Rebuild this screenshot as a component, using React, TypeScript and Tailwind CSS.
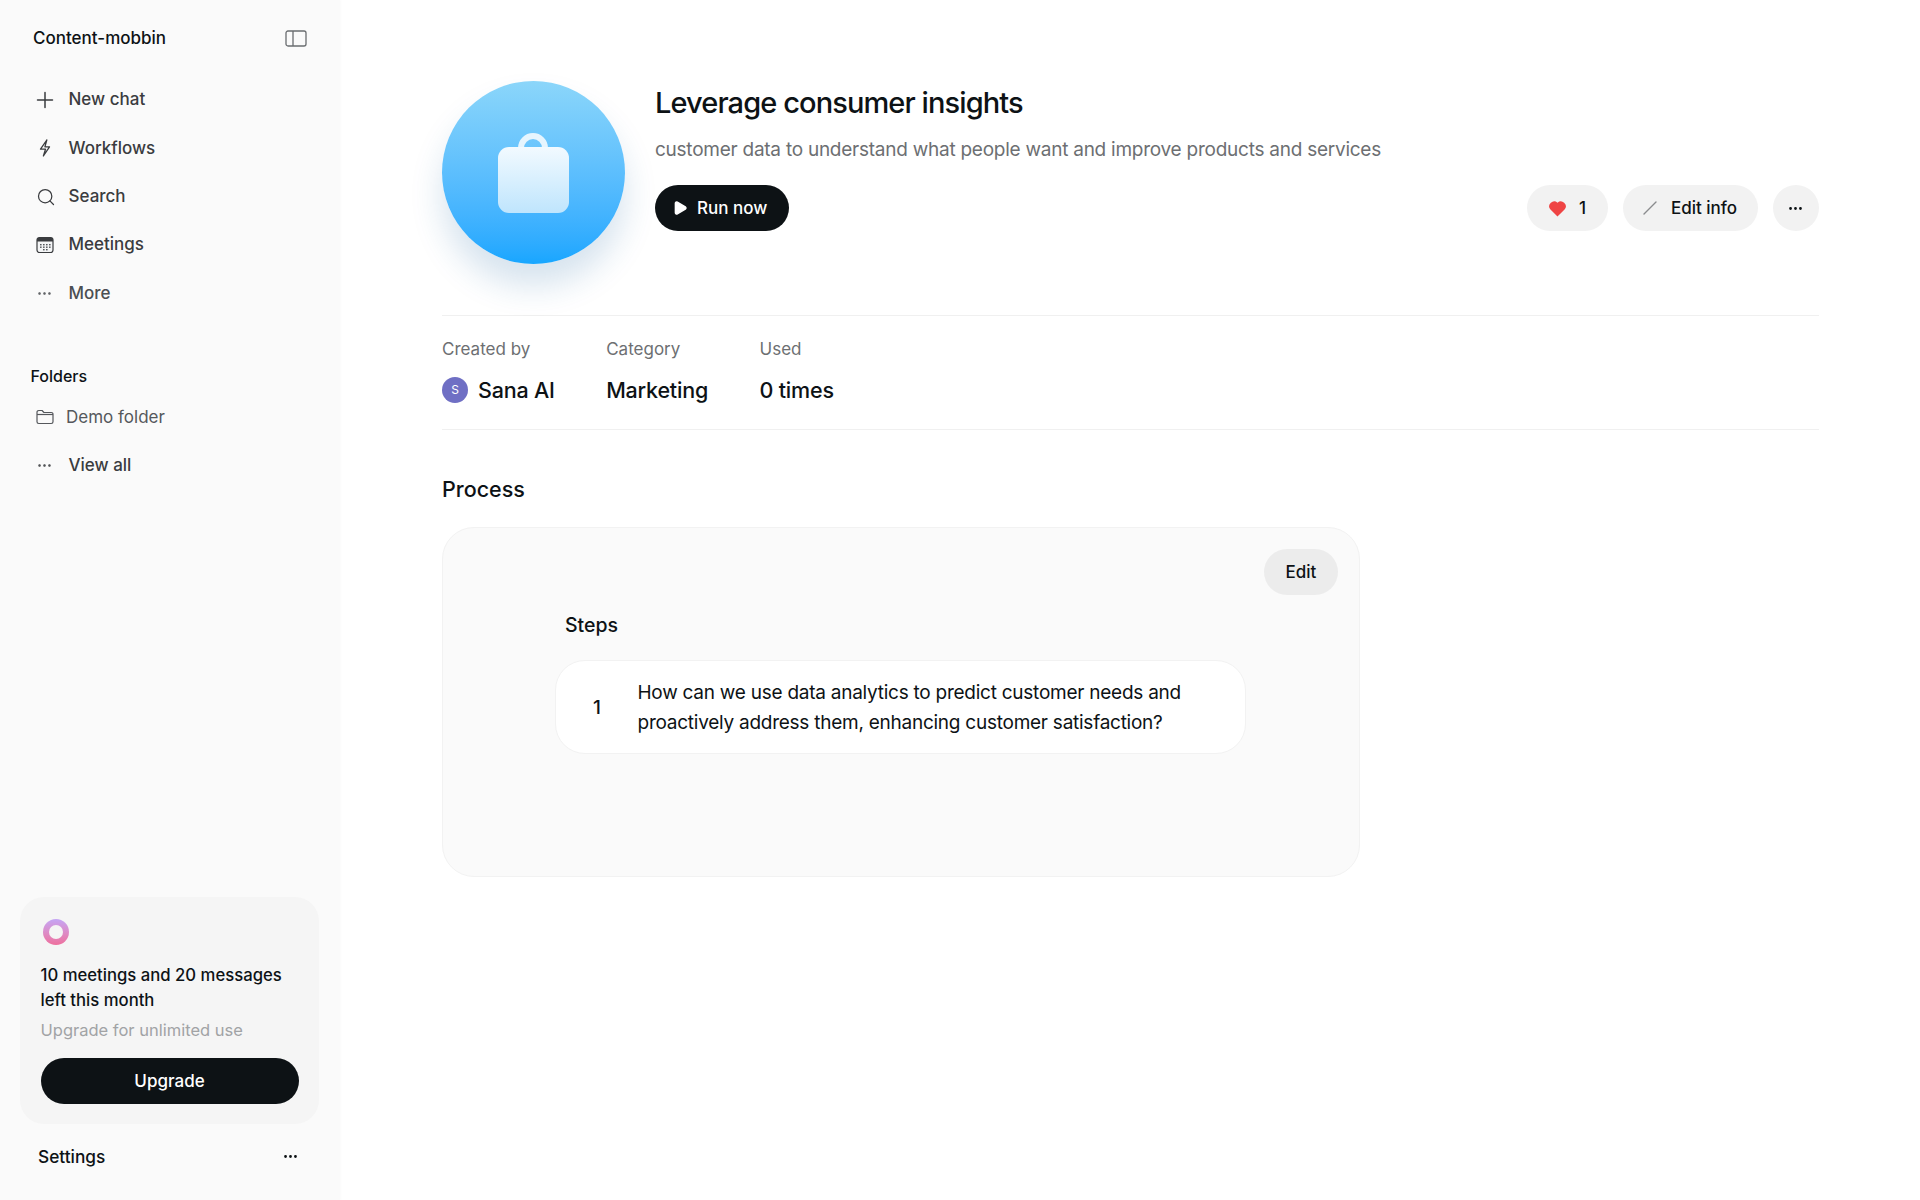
import { Search, Ellipsis, Play } from "lucide-react";

function NavItem({ icon, label, cls = "text-[#3a3c3f]" }: { icon: React.ReactNode; label: string; cls?: string }) {
  return (
    <div className={`flex h-[48.3px] items-center pl-[36px] text-[17px] font-medium ${cls}`}>
      <span className="flex w-[32.5px] shrink-0 items-center">{icon}</span>
      {label}
    </div>
  );
}

function CalendarIcon() {
  return (
    <svg width="18" height="18" viewBox="0 0 18 18" fill="none">
      <rect x="1" y="1.5" width="16" height="15" rx="2.5" fill="#f4f5f6" stroke="#3a3c3f" strokeWidth="1.2" />
      <path d="M1 4a2.5 2.5 0 0 1 2.5-2.5h11A2.5 2.5 0 0 1 17 4v1.5H1z" fill="#3a3c3f" />
      <g fill="#55585c">
        <rect x="4" y="8" width="1.6" height="1.4" /><rect x="7" y="8" width="1.6" height="1.4" /><rect x="10" y="8" width="1.6" height="1.4" /><rect x="13" y="8" width="1.6" height="1.4" />
        <rect x="4" y="10.5" width="1.6" height="1.4" /><rect x="7" y="10.5" width="1.6" height="1.4" /><rect x="10" y="10.5" width="1.6" height="1.4" /><rect x="13" y="10.5" width="1.6" height="1.4" />
        <rect x="7" y="13" width="1.6" height="1.4" /><rect x="10" y="13" width="1.6" height="1.4" />
      </g>
    </svg>
  );
}

function PlusIcon() {
  return (
    <svg width="18" height="18" viewBox="0 0 18 18" fill="none" stroke="#3a3c3f" strokeWidth="1.5" strokeLinecap="round">
      <path d="M9 1.5v15M1.5 9h15" />
    </svg>
  );
}

function BoltIcon() {
  return (
    <svg width="18" height="18" viewBox="0 0 18 18" fill="none" stroke="#3a3c3f" strokeWidth="1.3" strokeLinejoin="round" strokeLinecap="round">
      <path d="M10.8 1 4.5 10.2h5L7.4 17l6.1-9.2h-4.6z" />
    </svg>
  );
}

function PanelIcon() {
  return (
    <svg width="22" height="17" viewBox="0 0 22 17" fill="none" stroke="#6a6d70" strokeWidth="1.3">
      <rect x="1" y="1" width="20" height="15" rx="2" />
      <path d="M8 1v15" />
    </svg>
  );
}

function FolderIcon() {
  return (
    <svg width="18" height="16" viewBox="0 0 18 16" fill="none" stroke="#55585c" strokeWidth="1.2" strokeLinejoin="round">
      <path d="M1 3.2A1.7 1.7 0 0 1 2.7 1.5h3.4l1.8 2h7.4A1.7 1.7 0 0 1 17 5.2v7.6a1.7 1.7 0 0 1-1.7 1.7H2.7A1.7 1.7 0 0 1 1 12.8z" />
      <path d="M1 5.5h16" />
    </svg>
  );
}

function Sidebar() {
  return (
    <aside className="flex h-[1200px] w-[340px] shrink-0 flex-col bg-[#fafafa] shadow-[1px_0_2px_rgba(0,0,0,0.02)]">
      <div className="flex items-center justify-between pl-[33px] pr-[33px] pt-[27px]">
        <span className="text-[17px] font-medium leading-[22px] text-[#0d1215]">Content-mobbin</span>
        <PanelIcon />
      </div>
      <nav className="mt-[27px] flex flex-col">
        <NavItem icon={<PlusIcon />} label="New chat" />
        <NavItem icon={<BoltIcon />} label="Workflows" />
        <NavItem icon={<Search size={20} strokeWidth={1.5} />} label="Search" />
        <NavItem icon={<CalendarIcon />} label="Meetings" />
        <NavItem icon={<Ellipsis size={17} strokeWidth={1.5} />} label="More" cls="text-[#4b4e52]" />
      </nav>
      <div className="mt-[49px] pl-[30.5px] text-[16px] font-medium leading-[20px] text-[#0d1215]">Folders</div>
      <div className="mt-[7px] flex flex-col">
        <div className="flex h-[48px] items-center pl-[36px] text-[17px] text-[#55585c]">
          <span className="mr-[12px] flex w-[18px] shrink-0 items-center"><FolderIcon /></span>
          Demo folder
        </div>
        <NavItem icon={<Ellipsis size={17} strokeWidth={1.5} />} label="View all" />
      </div>
      <div className="mt-auto mx-[20px] h-[227px] w-[299px] rounded-[24px] bg-[#f5f5f5] pl-[20.5px] pr-[20.5px] pt-[22px]">
        <div className="ml-[2px] h-[26px] w-[26px] rounded-full bg-gradient-to-b from-[#c4a5f5] to-[#ee6f9d] p-[6px]">
          <div className="h-full w-full rounded-full bg-[#f5f5f5]" />
        </div>
        <p className="mt-[18px] text-[16.7px] font-medium leading-[25px] text-[#0d1215]">10 meetings and 20 messages left this month</p>
        <p className="mt-[5px] text-[16.5px] leading-[25px] text-[#a1a3a5]">Upgrade for unlimited use</p>
        <button className="mt-[15px] h-[46px] w-full rounded-full bg-[#0d1215] pt-[1px] text-[17px] font-medium text-white">Upgrade</button>
      </div>
      <div className="flex h-[76px] items-start justify-between pl-[38px] pr-[41px] pt-[21px]">
        <span className="text-[17.3px] font-medium leading-[24px] text-[#0d1215]">Settings</span>
        <Ellipsis size={17} strokeWidth={2} className="mt-[3px] text-[#0d1215]" />
      </div>
    </aside>
  );
}

function Stat({ label, children }: { label: string; children: React.ReactNode }) {
  return (
    <div>
      <div className="text-[17px] leading-[22px] text-[#6d6f72]">{label}</div>
      <div className="mt-[16px] flex h-[28px] items-center text-[21.5px] font-medium tracking-[-0.2px] text-[#0d1215]">{children}</div>
    </div>
  );
}

export default function App() {
  return (
    <div className="flex h-[1200px] w-[1920px] overflow-hidden bg-white font-['Inter',sans-serif]">
      <Sidebar />
      <main className="ml-[102px] w-[1376.5px] shrink-0">
        <section className="box-content flex h-[234px] border-b border-[#f0f0f0] pt-[81px]">
          <div className="relative h-[183px] w-[183px] shrink-0 rounded-full bg-gradient-to-b from-[#8bd6fa] to-[#17a6ff] shadow-[0_22px_32px_rgba(30,100,160,0.18)]">
            <svg className="absolute left-[53px] top-[51px]" width="78" height="86" viewBox="0 0 78 86" fill="none">
              <defs>
                <linearGradient id="bag" x1="0" y1="0" x2="0" y2="1">
                  <stop offset="0" stopColor="#f2faff" />
                  <stop offset="1" stopColor="#bfe5fd" />
                </linearGradient>
              </defs>
              <path d="M26 18v-2a12 12 0 0 1 24 0v2" stroke="#e6f5fe" strokeWidth="6" fill="none" />
              <rect x="3" y="15" width="71" height="66" rx="11" fill="url(#bag)" />
            </svg>
          </div>
          <div className="ml-[30px] flex-1">
            <h1 className="pt-[3px] text-[29px] font-medium leading-[38px] tracking-[-0.9px] text-[#0d1215]">Leverage consumer insights</h1>
            <p className="mt-[14px] text-[19px] leading-[28px] tracking-[-0.25px] text-[#6d6f72]">customer data to understand what people want and improve products and services</p>
            <div className="mt-[21px] flex items-center">
              <button className="flex h-[46px] w-[134px] items-center rounded-full bg-[#0d1215] pl-[17px] text-[17px] font-medium text-white">
                <Play size={16} fill="white" className="mr-[9px]" />
                <span className="pt-[1px]">Run now</span>
              </button>
              <div className="ml-auto flex items-center gap-[15px]">
                <button className="flex h-[46px] w-[81px] items-center justify-center gap-[12px] rounded-full bg-[#f2f2f2] text-[17px] font-medium text-[#0d1215]">
                  <svg width="19" height="17" viewBox="0 0 24 22"><path d="M12 21.5 2.6 12A6.4 6.4 0 0 1 12 3.4 6.4 6.4 0 0 1 21.4 12z" fill="#ef4444" /></svg>
                  <span className="pt-[1px]">1</span>
                </button>
                <button className="flex h-[46px] w-[135px] items-center justify-center gap-[14px] rounded-full bg-[#f2f2f2] text-[17px] font-medium text-[#0d1215]">
                  <svg width="14" height="14" viewBox="0 0 14 14"><path d="M1 13 13 1" stroke="#8a8c8e" strokeWidth="1.4" strokeLinecap="round" /></svg>
                  <span className="pt-[1px]">Edit info</span>
                </button>
                <button className="flex h-[46px] w-[46px] items-center justify-center rounded-full bg-[#f2f2f2] text-[#0d1215]">
                  <Ellipsis size={17} strokeWidth={2} />
                </button>
              </div>
            </div>
          </div>
        </section>
        <section className="flex h-[114px] gap-[51.5px] border-b border-[#f0f0f0] pt-[22px]">
          <Stat label="Created by">
            <span className="mr-[10px] flex h-[26px] w-[26px] items-center justify-center rounded-full bg-[#6f6fc4] text-[12px] font-normal text-white">S</span>
            Sana AI
          </Stat>
          <Stat label="Category">Marketing</Stat>
          <Stat label="Used">0 times</Stat>
        </section>
        <h2 className="mt-[44px] text-[21.5px] font-medium leading-[30px] text-[#0d1215]">Process</h2>
        <section className="relative mt-[23px] h-[350px] w-[918px] rounded-[32px] border border-[#f2f2f2] bg-[#fafafa] pl-[112px]">
          <button className="absolute right-[21px] top-[21px] h-[46px] w-[74px] rounded-full bg-[#ececec] pt-[1px] text-[17px] font-medium text-[#0d1215]">Edit</button>
          <div className="pl-[10px] pt-[84px] text-[19.5px] font-medium leading-[26px] text-[#0d1215]">Steps</div>
          <div className="mt-[22px] flex h-[94px] w-[691px] items-center rounded-[30px] border border-[#f2f2f2] bg-white pl-[37px] pt-[2px]">
            <span className="w-[44.5px] shrink-0 text-[19px] font-medium text-[#0d1215]">1</span>
            <p className="w-[580px] text-[19px] leading-[30.5px] tracking-[-0.25px] text-[#0d1215]">How can we use data analytics to predict customer needs and proactively address them, enhancing customer satisfaction?</p>
          </div>
        </section>
      </main>
    </div>
  );
}
